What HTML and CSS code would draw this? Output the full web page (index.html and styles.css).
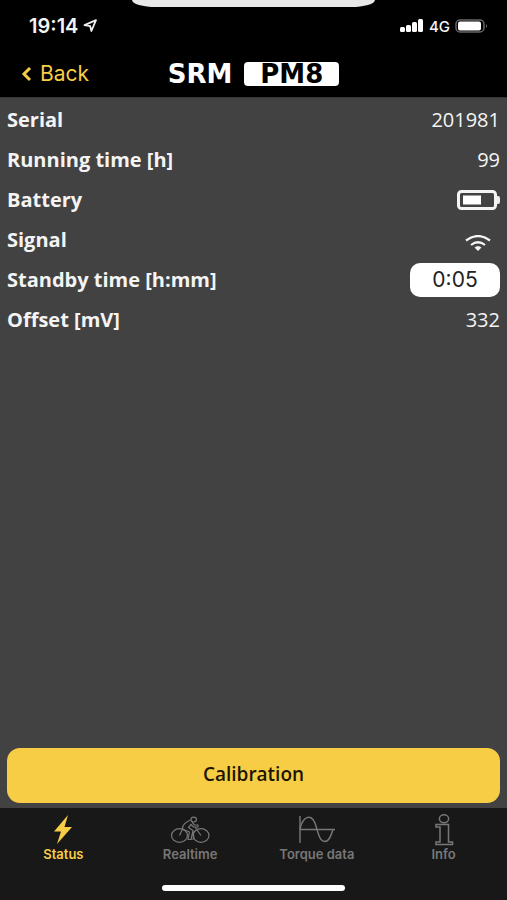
FILE: index.html
```html
<!DOCTYPE html>
<html lang="en">
<head>
  <meta charset="UTF-8">
  <meta name="viewport" content="width=device-width, initial-scale=1.0">
  <title>SRM PM8</title>
  <link rel="stylesheet" href="styles.css">
</head>
<body>
  <!-- Header -->
  <header class="header">
    <div class="notch"></div>
    <div class="status-bar">
      <div class="clock">
        <span>19:14</span>
        <svg width="15" height="14" viewBox="0 0 15 14">
          <path d="M1.5 6.2 L13 1.2 L8.4 12 L7.2 7.2 Z" fill="none" stroke="#eee" stroke-width="1.8" stroke-linejoin="round"/>
        </svg>
      </div>
      <div class="network">
        <svg width="24" height="14" viewBox="0 0 24 14" fill="#fff">
          <rect x="0" y="8" width="5" height="5" rx="1.5"/>
          <rect x="6" y="6" width="5" height="7" rx="1.5"/>
          <rect x="12" y="3" width="5" height="10" rx="1.5"/>
          <rect x="18" y="0" width="5" height="13" rx="1.5"/>
        </svg>
        <span>4G</span>
        <svg width="33" height="14" viewBox="0 0 33 14">
          <rect x="1" y="1" width="28" height="12" rx="4" fill="none" stroke="#666" stroke-width="1.5"/>
          <rect x="3" y="2.5" width="23" height="9" rx="2" fill="#fff"/>
          <path d="M31 5 Q33 7 31 9 Z" fill="#777"/>
        </svg>
      </div>
    </div>
    <nav class="nav-bar">
      <a class="back" href="#">
        <svg width="12" height="16" viewBox="0 0 12 16">
          <path d="M10 2 L4 8 L10 14" fill="none" stroke="#f7cd46" stroke-width="3"/>
        </svg>
        <span>Back</span>
      </a>
      <h1 class="logo"><span>SRM</span><span class="logo-box">PM8</span></h1>
    </nav>
  </header>

  <!-- Sensor values -->
  <main class="content">
    <dl class="values">
      <div class="row"><dt>Serial</dt><dd>201981</dd></div>
      <div class="row"><dt>Running time [h]</dt><dd>99</dd></div>
      <div class="row">
        <dt>Battery</dt>
        <dd>
          <svg width="43" height="20" viewBox="0 0 43 20" role="img" aria-label="Battery level">
            <rect x="1.5" y="1.5" width="37" height="17" rx="3" fill="none" stroke="#f4f4f4" stroke-width="3"/>
            <rect x="6" y="5.5" width="18" height="9" fill="#fff"/>
            <path d="M40 6 h1 q2 0 2 2 v4 q0 2 -2 2 h-1 Z" fill="#eee"/>
          </svg>
        </dd>
      </div>
      <div class="row">
        <dt>Signal</dt>
        <dd class="signal">
          <svg width="26" height="16" viewBox="0 0 26 16" role="img" aria-label="Signal strength">
            <path d="M1 5.5 Q13 -3.5 25 5.5 M6 10 Q13 4.5 20 10" fill="none" stroke="#f4f4f4" stroke-width="2.2"/>
            <path d="M9.5 12.5 Q13 9.5 16.5 12.5 L13 16 Z" fill="#f4f4f4"/>
          </svg>
        </dd>
      </div>
      <div class="row">
        <dt><label for="standby">Standby time [h:mm]</label></dt>
        <dd><input class="standby" id="standby" type="text" value="0:05"></dd>
      </div>
      <div class="row"><dt>Offset [mV]</dt><dd>332</dd></div>
    </dl>
    <button class="calibration" type="button">Calibration</button>
  </main>

  <!-- Tabs -->
  <footer class="footer">
    <nav class="tabs">
      <a class="tab active" href="#">
        <svg width="40" height="32" viewBox="0 0 40 32">
          <path d="M25 1 L11 17.5 H18 L14 30 L29 13 H21.5 Z" fill="currentColor"/>
        </svg>
        <span>Status</span>
      </a>
      <a class="tab" href="#">
        <svg width="40" height="32" viewBox="0 0 40 32" fill="none" stroke="currentColor" stroke-width="1.2" stroke-linejoin="round">
          <ellipse cx="9.5" cy="21.5" rx="8" ry="6.8"/>
          <ellipse cx="31" cy="21.5" rx="8" ry="6.8"/>
          <ellipse cx="23.7" cy="5.6" rx="2.8" ry="2.4"/>
          <path d="M20.5 6 Q13.5 9 12.5 13.5 Q12.5 16 16 16.5 L19.5 18 L18 25.5 H21 L23 16.5 L18.5 13.5 L21 10.5 L23.5 13 H28 V11 H24.5 L22 8.2 M12.5 15 L9.5 21.5 M25 13 L31 21.5 M23 17 L24 25 H21"/>
        </svg>
        <span>Realtime</span>
      </a>
      <a class="tab" href="#">
        <svg width="40" height="32" viewBox="0 0 40 32" fill="none" stroke="currentColor" stroke-width="1.4">
          <path d="M3 2 V29 M3 15.5 H38"/>
          <path d="M3 15.5 C6 1 15 -1 19 12 C23 27 25 27.5 28 27.5 C32 27.5 34 22 36 15.5"/>
        </svg>
        <span>Torque data</span>
      </a>
      <a class="tab" href="#">
        <svg width="40" height="32" viewBox="0 0 40 32" fill="none" stroke="currentColor" stroke-width="1.5">
          <ellipse cx="20" cy="4.8" rx="4.6" ry="4"/>
          <path d="M12 10.5 H24.5 V28 H28.5 V30.5 H12 V28 H16 V13 H12 Z"/>
        </svg>
        <span>Info</span>
      </a>
    </nav>
    <div class="home-indicator"></div>
  </footer>
</body>
</html>
```
FILE: styles.css
```css
* {
  box-sizing: border-box;
}

body {
  margin: 0;
  min-height: 100vh;
  display: flex;
  flex-direction: column;
  font-family: "Open Sans", "Noto Sans", sans-serif;
  color: #f4f4f4;
  background: #424242;
}

a {
  text-decoration: none;
}

svg {
  display: block;
}

.header {
  position: relative;
  padding-top: 12px;
  background: #000;
  border-bottom: 1px solid #333;
}

.notch {
  position: absolute;
  top: 0;
  left: 26%;
  right: 26%;
  height: 7px;
  background: #e8e8e8;
  border-radius: 0 0 24px 24px / 0 0 7px 7px;
}

.status-bar {
  display: flex;
  justify-content: space-between;
  align-items: center;
  height: 28px;
  padding: 0 19px 0 29px;
  font-family: Inter, sans-serif;
}

.clock, .network {
  display: flex;
  align-items: center;
  gap: 5px;
}

.clock {
  font-size: 20px;
  font-weight: 600;
}

.network {
  font-size: 15px;
  font-weight: 500;
}

.nav-bar {
  display: grid;
  grid-template-columns: 1fr auto 1fr;
  align-items: center;
  height: 57px;
  padding: 10px 20px 0;
}

.back {
  display: flex;
  align-items: center;
  gap: 8px;
  color: #f7cd46;
  font-family: Inter, sans-serif;
  font-size: 21px;
}

.logo {
  display: flex;
  align-items: center;
  gap: 12px;
  margin: 0;
  color: #fff;
  font-family: "DejaVu Sans", sans-serif;
  font-size: 26px;
  line-height: 22px;
}

.logo-box {
  padding: 1px 16px;
  background: #fff;
  color: #000;
  border-radius: 4px;
}

.content {
  flex: 1;
  display: flex;
  flex-direction: column;
  justify-content: space-between;
  padding: 2px 7px 5px;
}

.values {
  margin: 0;
}

.row {
  display: flex;
  justify-content: space-between;
  align-items: center;
  height: 40px;
  font-size: 20px;
  line-height: 26px;
}

.row dt, .row dd {
  margin: 0;
  padding-bottom: 1px;
}

.row dt {
  font-weight: 700;
}

.row .signal {
  padding: 6px 9px 0 0;
}

.standby {
  display: block;
  width: 90px;
  height: 34px;
  padding: 0;
  border: none;
  border-radius: 10px;
  background: #fff;
  color: #222;
  font-family: Inter, sans-serif;
  font-size: 21px;
  text-align: center;
}

.calibration {
  height: 55px;
  padding: 0 0 4px;
  border: none;
  border-radius: 13px;
  background: #f7cd46;
  color: #1c1400;
  font-family: inherit;
  font-size: 19px;
  font-weight: 600;
  cursor: pointer;
}

.footer {
  padding: 6px 0 9px;
  background: #181818;
}

.tabs {
  display: grid;
  grid-template-columns: repeat(4, 1fr);
}

.tab {
  display: flex;
  flex-direction: column;
  align-items: center;
  color: #777;
  font-family: Inter, sans-serif;
  font-size: 13px;
  font-weight: 600;
  line-height: 16px;
}

.tab.active {
  color: #f7cd46;
}

.home-indicator {
  width: 36%;
  height: 6px;
  margin: 23px auto 0;
  border-radius: 3px;
  background: #fff;
}
```
